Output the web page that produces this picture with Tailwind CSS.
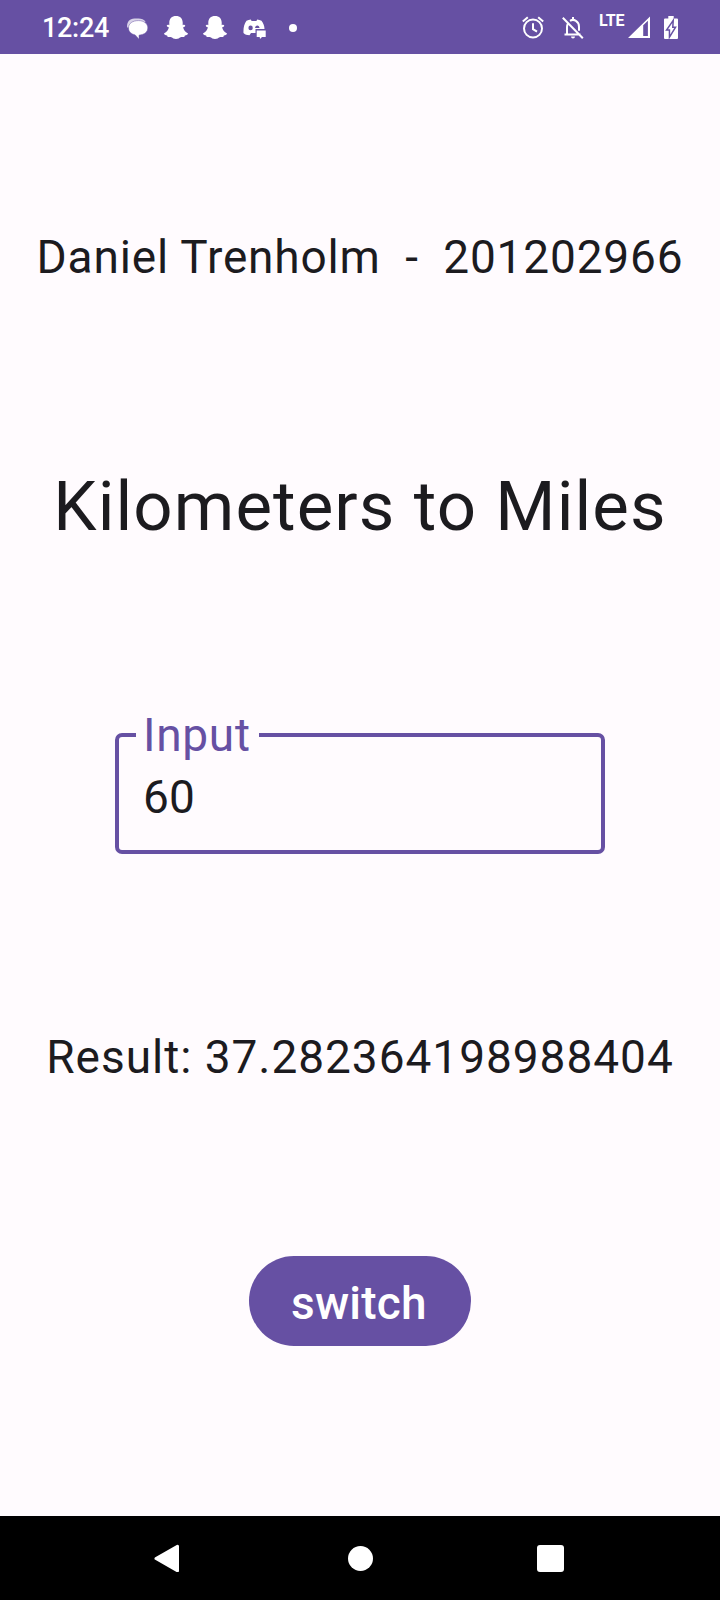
<!DOCTYPE html>
<html lang="en">
<head>
<meta charset="utf-8">
<title>Converter</title>
<script src="https://cdn.jsdelivr.net/npm/@tailwindcss/browser@4"></script>
</head>
<body class="bg-[#fffbfe]">
<div class="flex h-[1600px] w-[720px] flex-col overflow-hidden bg-[#fffbfe] font-['Roboto',sans-serif] text-[#1c1b1f]">
  <header class="flex h-[54px] items-center bg-[#6650a3] pt-px pl-[42px] text-white">
    <span class="w-[83px] pt-px text-[27px] leading-[53px] font-medium tracking-[-0.3px] whitespace-nowrap">12:24</span>
    <!-- messages -->
    <svg class="h-6 w-6" viewBox="0 0 24 24" fill="#fff">
      <path d="M2.200 11.500C1.300 6.500 4.500 2.600 9.500 2.600h4c3 0 5.500 1 7 3l-6 6z" fill-opacity=".75"/>
      <path d="M13.500 4.600c5.200 0 9.300 2.900 9.300 7.300 0 3.300-2 5.500-5.300 6.500l-3.500.8v4l-3.800-4.300c-4-.9-6.700-3.300-6.700-7 0-4.400 4-7.300 10-7.300z" stroke="#6650a3" stroke-width=".5"/>
    </svg>
    <!-- ghosts -->
    <svg class="ml-[15px] h-6 w-6" viewBox="0 0 24 24" fill="#fff"><path d="M12 0c4.200 0 6.700 2.700 6.700 6.600v2.600c.9-.5 2.200-.5 2.500.3.300.9-.8 1.500-2.100 2 .7 2.500 2.200 4.700 4.900 5.900.2.900-1 1.700-3.100 2.100-.4.500-.2 1.300-.8 1.500-.8.200-2.100-.4-3.500.2-1.400.7-2.400 1.800-4.600 1.800s-3.200-1.100-4.600-1.800c-1.400-.6-2.700 0-3.500-.2-.6-.2-.4-1-.8-1.500-2.100-.4-3.300-1.200-3.100-2.100 2.700-1.200 4.200-3.400 4.900-5.900-1.300-.5-2.400-1.100-2.100-2 .3-.8 1.600-.8 2.500-.3V6.600C5.300 2.700 7.800 0 12 0z"/></svg>
    <svg class="ml-[15px] h-6 w-6" viewBox="0 0 24 24" fill="#fff"><path d="M12 0c4.200 0 6.700 2.700 6.700 6.600v2.600c.9-.5 2.200-.5 2.500.3.300.9-.8 1.500-2.100 2 .7 2.500 2.200 4.700 4.900 5.900.2.900-1 1.700-3.100 2.100-.4.500-.2 1.300-.8 1.500-.8.200-2.100-.4-3.500.2-1.400.7-2.400 1.800-4.600 1.800s-3.200-1.100-4.600-1.800c-1.400-.6-2.700 0-3.500-.2-.6-.2-.4-1-.8-1.500-2.100-.4-3.300-1.200-3.100-2.100 2.700-1.200 4.200-3.400 4.900-5.900-1.300-.5-2.400-1.100-2.100-2 .3-.8 1.600-.8 2.500-.3V6.600C5.300 2.700 7.800 0 12 0z"/></svg>
    <!-- controller with chat bubble -->
    <svg class="ml-[15px] h-6 w-6" viewBox="0 0 24 24" fill="#fff">
      <path fill-rule="evenodd" d="M4.500 4.800C6 4 7.200 3.600 8.800 3.400l.8 1.500h4.800l.8-1.500c1.600.2 2.800.6 4.300 1.400 2 2.600 2.900 5.400 3 8.200H13.500v4H9l-1.500 2.300c-2.500-.1-4.700-.9-6-2.300C1.200 12.300 2.100 8.100 4.500 4.800zM8.600 9.600a2.200 2.300 0 1 0 0 4.600 2.200 2.300 0 0 0 0-4.600zm6.700 0c-1.200 0-2.200.9-2.200 2.400h4.400c0-1.500-1-2.400-2.200-2.400z"/>
      <path d="M14.700 14.500h9v6.500h-3.700L18 23l-.3-2h-3z"/>
    </svg>
    <i class="ml-[22.500px] size-2 rounded-full bg-white"></i>
    <!-- alarm -->
    <svg class="ml-[224.500px] h-6 w-6" viewBox="0 0 24 24" fill="none" stroke="#fff" stroke-width="2">
      <circle cx="12" cy="12.500" r="9"/><path d="M12 7.200v6l4 2.500M1.800 5.500l5-4.300M22.200 5.500l-5-4.300"/>
    </svg>
    <!-- muted bell -->
    <svg class="ml-4 h-6 w-6" viewBox="0 0 24 24" fill="none" stroke="#fff" stroke-width="2">
      <path d="M3.500 18.500h16M6 18.500v-7.500c0-1.500.3-2.600.9-3.600M9 4.800c3.800-2.400 9 .4 9 5.900v4M12 1V4.200M1.800 1.700l20 20.500"/><path d="M10 20.500h4a2 2 0 0 1-4 0z" fill="#fff" stroke="none"/>
    </svg>
    <span class="ml-[14px] -mt-[13px] w-[28px] text-[16px] leading-4 font-bold tracking-[-0.2px]">LTE</span>
    <!-- signal -->
    <svg class="ml-[1px] h-6 w-6" viewBox="0 0 24 24" fill="#fff"><path d="M0 22 22 .5V22zM15.200 9.300V20h4.700V4.700z" fill-rule="evenodd"/></svg>
    <!-- charging battery -->
    <svg class="ml-[12px] h-6 w-[14px]" viewBox="0 0 14 24" fill="#fff"><path d="M4.300 0h5.400v2.500H13q1 0 1 1V22q0 1-1 1H1q-1 0-1-1V3.500q0-1 1-1h3.300z"/><path d="M8.300 7 4 13.300h2.200v5.200l4-6.500H8z" stroke="#6650a3" stroke-width="3"/><path d="M8.300 7 4 13.300h2.200v5.200l4-6.500H8z"/></svg>
  </header>

  <main class="flex flex-1 flex-col items-center">
    <p class="mt-[176px] text-[46px] leading-[54px] tracking-[0.830px] whitespace-pre">Daniel Trenholm  -  201202966</p>
    <h1 class="mt-[182px] text-[69px] leading-[81px] tracking-[1.080px] whitespace-nowrap">Kilometers to Miles</h1>
    <fieldset class="mt-[161px] h-[146px] w-[490px] rounded-[7px] border-4 border-[#6650a3] pl-[17px]">
      <legend class="w-[123px] pl-[7px] text-[46px] leading-[54px] tracking-[0.700px] text-[#6650a3]">Input</legend>
      <div class="pt-2 pl-[7px] text-[46px] leading-[54px] tracking-[0.200px]">60</div>
    </fieldset>
    <p class="mt-[176px] text-[46px] leading-[54px] tracking-[0.970px] whitespace-nowrap">Result: 37.282364198988404</p>
    <button class="mt-[172px] h-[90px] w-[222px] rounded-full bg-[#6650a3] pt-1 pr-[2px] text-[46px] leading-[54px] font-medium tracking-[0.230px] text-white">switch</button>
  </main>

  <nav class="flex h-[84px] items-center bg-black pl-[154px]">
    <svg class="h-7 w-[26px]" viewBox="0 0 26 28" fill="#fff" stroke="#fff" stroke-width="3" stroke-linejoin="round"><path d="M2 14.500 23.500 2.200v24.600z"/></svg>
    <i class="ml-[168px] size-[25px] rounded-full bg-white"></i>
    <i class="ml-[164px] size-[27px] rounded-[3px] bg-white"></i>
  </nav>
</div>
</body>
</html>
